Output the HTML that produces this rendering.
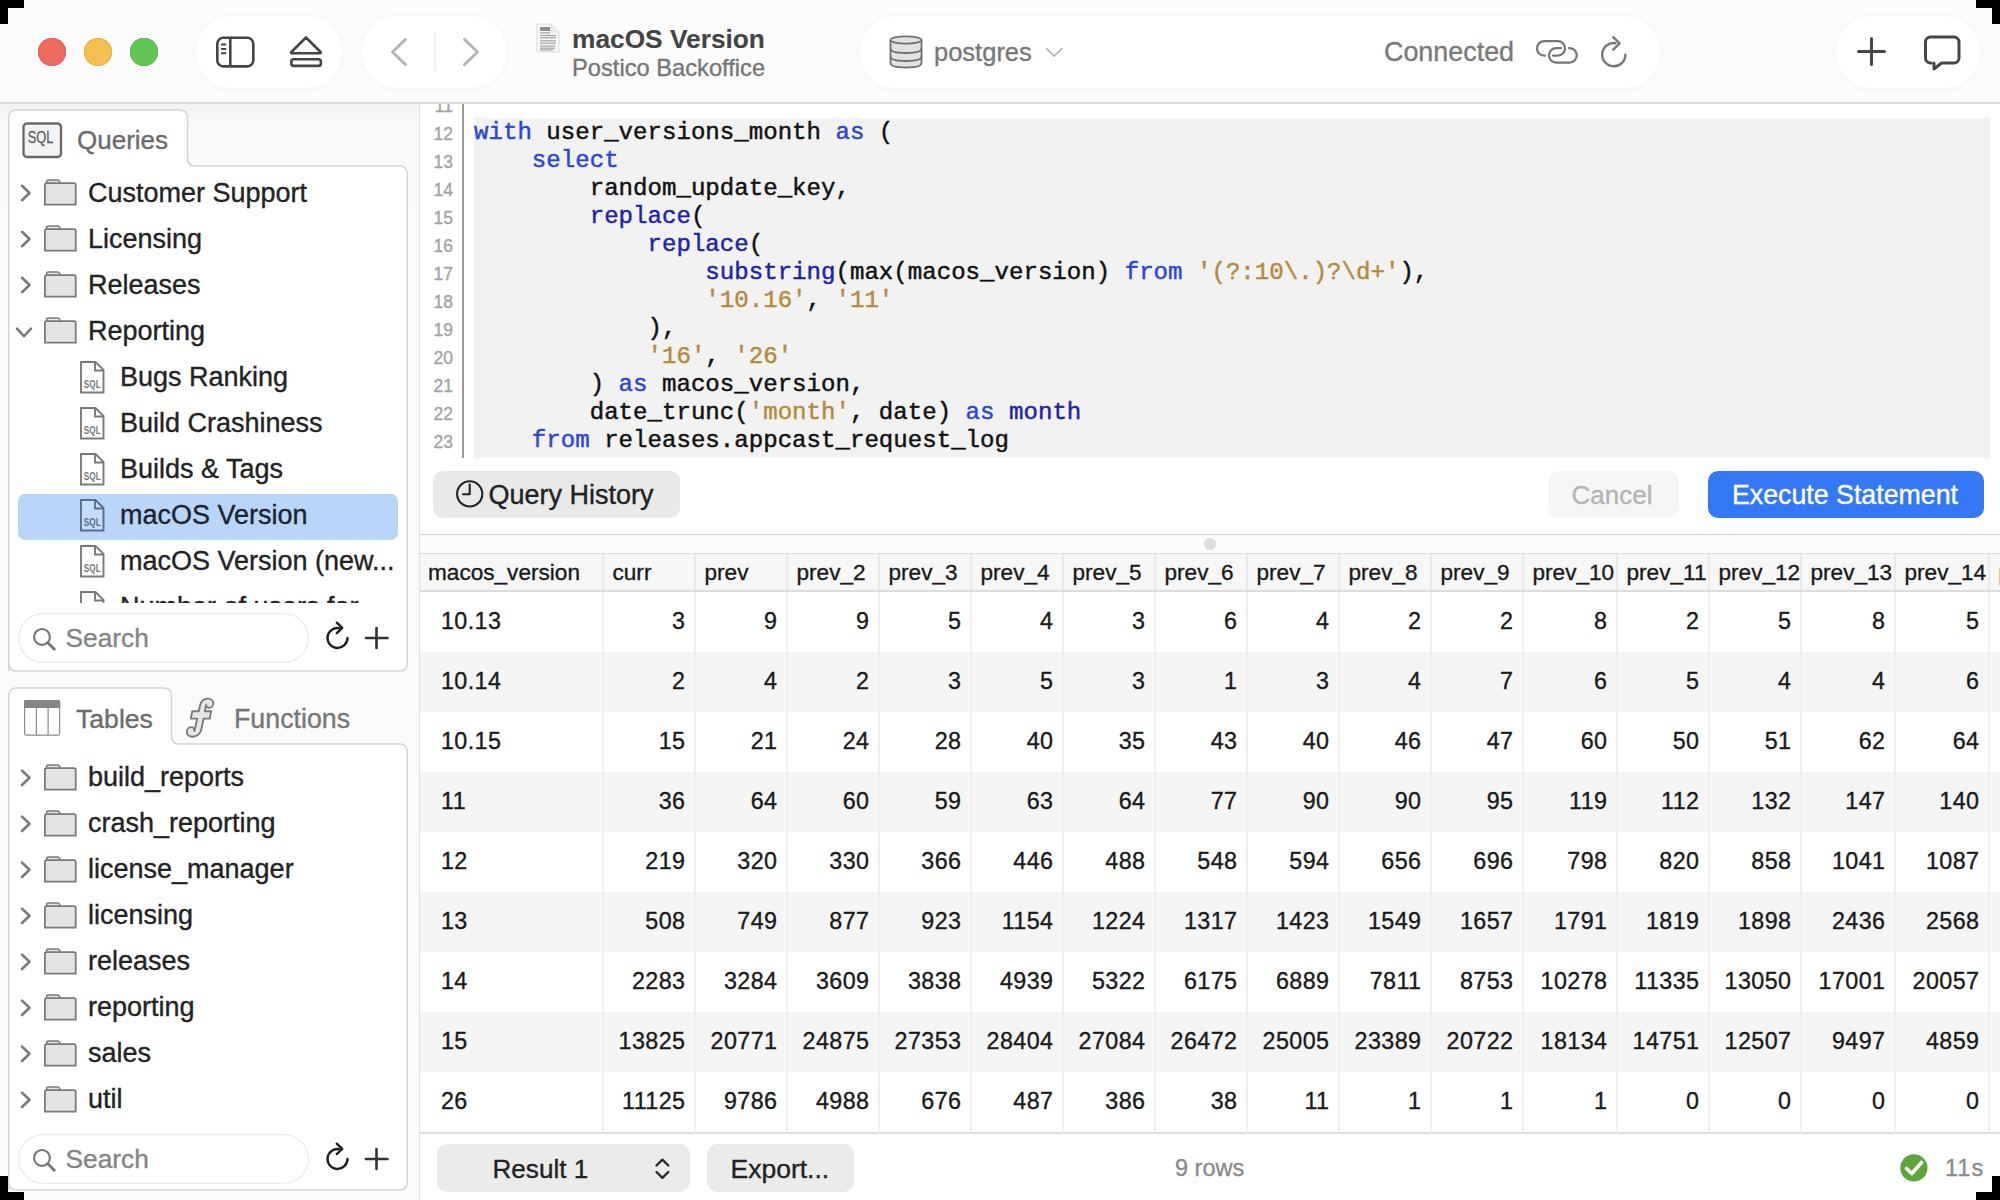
<!DOCTYPE html>
<html><head><meta charset="utf-8"><title>Postico</title>
<style>
*{margin:0;padding:0;box-sizing:border-box}
html,body{width:2000px;height:1200px;overflow:hidden;background:#fff}
body{position:relative;font-family:"Liberation Sans",sans-serif}
.t{position:absolute;line-height:0;white-space:pre;-webkit-text-stroke:0.35px}
.mono{position:absolute;line-height:0;white-space:pre;-webkit-text-stroke:0.45px;font-family:"Liberation Mono",monospace}
.abs{position:absolute}
svg{position:absolute;overflow:visible}
</style></head><body>
<div class="abs" style="left:0;top:0;width:2000px;height:102px;background:#fcfcfc"></div>
<div class="abs" style="left:0;top:102px;width:2000px;height:1.5px;background:#dadada"></div>
<div class="abs" style="left:38px;top:38px;width:28px;height:28px;border-radius:50%;background:#ed6a5e;box-shadow:inset 0 0 0 0.6px #d2574c"></div>
<div class="abs" style="left:84px;top:38px;width:28px;height:28px;border-radius:50%;background:#f4c04f;box-shadow:inset 0 0 0 0.6px #d9a63c"></div>
<div class="abs" style="left:130px;top:38px;width:28px;height:28px;border-radius:50%;background:#62c655;box-shadow:inset 0 0 0 0.6px #4fab43"></div>
<div class="abs" style="left:196px;top:16px;width:146px;height:72px;border-radius:36px;background:#fff;box-shadow:0 1px 9px 2px rgba(0,0,0,0.028)"></div>
<div class="abs" style="left:362px;top:16px;width:144px;height:72px;border-radius:36px;background:#fff;box-shadow:0 1px 9px 2px rgba(0,0,0,0.028)"></div>
<div class="abs" style="left:860px;top:16px;width:800px;height:72px;border-radius:36px;background:#fff;box-shadow:0 1px 9px 2px rgba(0,0,0,0.028)"></div>
<div class="abs" style="left:1836px;top:16px;width:144px;height:72px;border-radius:36px;background:#fff;box-shadow:0 1px 9px 2px rgba(0,0,0,0.028)"></div>
<svg style="left:0;top:0" width="2000" height="102">
<g fill="none" stroke="#454545" stroke-width="2.6" stroke-linecap="round">
<rect x="217.3" y="37.8" width="36" height="28.6" rx="6"/>
<line x1="230.3" y1="38" x2="230.3" y2="66"/>
<line x1="221.8" y1="44.6" x2="225.5" y2="44.6" stroke-width="2"/>
<line x1="221.8" y1="49" x2="225.5" y2="49" stroke-width="2"/>
<line x1="221.8" y1="53.3" x2="225.5" y2="53.3" stroke-width="2"/>
<path d="M306 37.5 L320.6 52 Q321.5 53 320 53.3 L291.8 53.3 Q290.4 53 291.4 52 Z" stroke-linejoin="round"/>
<rect x="291.3" y="59.3" width="29.6" height="6.6" rx="2.4"/>
</g>
<g fill="none" stroke="#b5b5b5" stroke-width="3" stroke-linecap="round" stroke-linejoin="round">
<path d="M405.5 39.5 L392.5 52 L405.5 64.5"/>
<path d="M464.5 39.5 L477.5 52 L464.5 64.5"/>
</g>
<line x1="435" y1="32" x2="435" y2="71.5" stroke="#e6e6e6" stroke-width="1.2"/>
</svg>
<svg style="left:536px;top:23px" width="24" height="30" viewBox="0 0 24 30">
<path d="M1 1 H15 L23 9 V29 H1 Z" fill="#f8f8f8" stroke="#dadada" stroke-width="1"/>
<path d="M15 1 V9 H23" fill="#ececec" stroke="#dadada" stroke-width="0.8"/>
<rect x="4" y="4" width="10" height="4" fill="#8e8e8e"/>
<g stroke="#a8a8a8" stroke-width="1.3">
<line x1="4" y1="9.8" x2="14" y2="9.8"/><line x1="4" y1="12.5" x2="20" y2="12.5"/><line x1="4" y1="14.8" x2="20" y2="14.8"/>
<line x1="4" y1="17.8" x2="20" y2="17.8"/><line x1="4" y1="20.2" x2="20" y2="20.2"/>
<line x1="4" y1="23" x2="19" y2="23"/><line x1="4" y1="25.2" x2="19" y2="25.2"/><line x1="4" y1="27" x2="17" y2="27"/>
</g></svg>
<div class="t" style="left:572px;top:38.89px;font-size:26.3px;color:#444444;font-weight:bold;-webkit-text-stroke:0.1px;">macOS Version</div>
<div class="t" style="left:572px;top:68.29px;font-size:23.7px;color:#767676;font-weight:normal;">Postico Backoffice</div>
<svg style="left:889px;top:35px" width="34" height="34" viewBox="0 0 34 34">
<g fill="#e2e2e2" stroke="#707070" stroke-width="1.8">
<path d="M1.5 5 V28 C1.5 31 8 32.5 17 32.5 C26 32.5 32.5 31 32.5 28 V5"/>
<ellipse cx="17" cy="5" rx="15.5" ry="3.6"/>
<path d="M1.5 13.5 C1.5 16.5 8 18 17 18 C26 18 32.5 16.5 32.5 13.5" fill="none"/>
<path d="M1.5 21.5 C1.5 24.5 8 26 17 26 C26 26 32.5 24.5 32.5 21.5" fill="none"/>
</g></svg>
<div class="t" style="left:934px;top:51.96px;font-size:25.5px;color:#777777;font-weight:normal;">postgres</div>
<svg style="left:0;top:0" width="2000" height="102">
<path d="M1046.5 48.7 L1054.2 56 L1061.9 48.7" fill="none" stroke="#b9b9b9" stroke-width="1.8" stroke-linecap="round" stroke-linejoin="round"/>
</svg>
<div class="t" style="left:1384px;top:52.48px;font-size:26.9px;color:#7a7a7a;font-weight:normal;">Connected</div>
<svg style="left:0;top:0" width="2000" height="102">
<g fill="none" stroke="#777777" stroke-width="2.3" stroke-linecap="round">
<path d="M1545 55.6 H1544.2 A7.2 7.2 0 0 1 1544.2 41.2 H1557.8 A7.2 7.2 0 0 1 1557.8 55.6 H1553"/>
<path d="M1569 48.1 H1569.5 A7.25 7.25 0 0 1 1569.5 62.6 H1556.2 A7.25 7.25 0 0 1 1556.2 48.1 H1561"/>
</g>
<g fill="none" stroke="#777777" stroke-width="2.4" stroke-linecap="round" stroke-linejoin="round">
<path d="M1625.4 54.7 A11.6 11.6 0 1 1 1615.5 43.2"/>
<path d="M1613.3 37.2 L1619.6 43.4 L1613.3 49.7"/>
</g>
<g fill="none" stroke="#464646" stroke-width="3" stroke-linecap="round" stroke-linejoin="round">
<line x1="1871.5" y1="38.5" x2="1871.5" y2="64.5"/>
<line x1="1858.5" y1="51.5" x2="1884.5" y2="51.5"/>
<path d="M1931 63 H1930 A5 5 0 0 1 1925.5 58 V42 A5 5 0 0 1 1930.5 37 H1954 A5 5 0 0 1 1959 42 V58 A5 5 0 0 1 1954 63 H1941.5 L1934 69 V63"/>
</g>
</svg>
<div class="abs" style="left:418.5px;top:103px;width:1.5px;height:1097px;background:#e2e2e2"></div>
<div class="abs" style="left:0;top:103.5px;width:418.5px;height:1096.5px;background:linear-gradient(#f3f3f3,#fafafa 30px,#fbfbfb)"></div>
<svg style="left:0;top:0" width="420" height="1200">
<path d="M8.75 671 V118 Q8.75 110 16.75 110 H179.5 Q187.5 110 187.5 118 V158 Q187.5 166 195.5 166 H399.25 Q407.25 166 407.25 174 V663 Q407.25 671 399.25 671 H16.75 Q8.75 671 8.75 663 Z" fill="#fff" stroke="#d5d5d5" stroke-width="1.5"/>
<path d="M8.75 1190 V696 Q8.75 688 16.75 688 H163.5 Q171.5 688 171.5 696 V736 Q171.5 744 179.5 744 H399.25 Q407.25 744 407.25 752 V1182 Q407.25 1190 399.25 1190 H16.75 Q8.75 1190 8.75 1182 Z" fill="#fff" stroke="#d5d5d5" stroke-width="1.5"/>
</svg>
<svg style="left:22px;top:122px" width="41" height="36" viewBox="0 0 41 36">
<rect x="1.5" y="1.5" width="37.5" height="33.5" rx="3.5" fill="#f4f4f4" stroke="#686868" stroke-width="2.3"/>
<text x="18.6" y="20.6" text-anchor="middle" font-family="Liberation Sans" font-size="16" fill="#5a5a5a" stroke="#5a5a5a" stroke-width="0.25" transform="translate(18.6 0) scale(0.8 1) translate(-18.6 0)">SQL</text>
</svg>
<div class="t" style="left:77px;top:140.49px;font-size:26px;color:#6b6b6b;font-weight:normal;">Queries</div>
<div class="abs" style="left:18px;top:494px;width:380px;height:45.5px;border-radius:7px;background:#b9d5f8"></div>
<div class="abs" style="left:10px;top:170px;width:396px;height:433px;overflow:hidden">
<svg style="left:0;top:0" width="1" height="1"><path d="M12 15.8 L19.5 23 L12 30.2" fill="none" stroke="#7b7b7b" stroke-width="2.6" stroke-linecap="round" stroke-linejoin="round"/></svg>
<svg style="left:34px;top:9px" width="34" height="28" viewBox="0 0 34 28"><path d="M2.6 4.2 V2.8 Q2.6 0.9 4.5 0.9 H13.6 Q15 0.9 15.6 2.2 L16.4 4.2" fill="#e4e4e4" stroke="#7a7a7a" stroke-width="1.5"/><path d="M0.9 25.6 V6 Q0.9 4.2 2.7 4.2 H30 Q31.7 4.2 31.7 6 V25.6 Z" fill="#e4e4e4" stroke="#7a7a7a" stroke-width="1.8"/></svg>
<div class="t" style="left:78.00px;top:22.64px;font-size:27.0px;color:#232323;font-weight:normal;">Customer Support</div>
<svg style="left:0;top:0" width="1" height="1"><path d="M12 61.8 L19.5 69 L12 76.2" fill="none" stroke="#7b7b7b" stroke-width="2.6" stroke-linecap="round" stroke-linejoin="round"/></svg>
<svg style="left:34px;top:55px" width="34" height="28" viewBox="0 0 34 28"><path d="M2.6 4.2 V2.8 Q2.6 0.9 4.5 0.9 H13.6 Q15 0.9 15.6 2.2 L16.4 4.2" fill="#e4e4e4" stroke="#7a7a7a" stroke-width="1.5"/><path d="M0.9 25.6 V6 Q0.9 4.2 2.7 4.2 H30 Q31.7 4.2 31.7 6 V25.6 Z" fill="#e4e4e4" stroke="#7a7a7a" stroke-width="1.8"/></svg>
<div class="t" style="left:78.00px;top:68.64px;font-size:27.0px;color:#232323;font-weight:normal;">Licensing</div>
<svg style="left:0;top:0" width="1" height="1"><path d="M12 107.8 L19.5 115 L12 122.2" fill="none" stroke="#7b7b7b" stroke-width="2.6" stroke-linecap="round" stroke-linejoin="round"/></svg>
<svg style="left:34px;top:101px" width="34" height="28" viewBox="0 0 34 28"><path d="M2.6 4.2 V2.8 Q2.6 0.9 4.5 0.9 H13.6 Q15 0.9 15.6 2.2 L16.4 4.2" fill="#e4e4e4" stroke="#7a7a7a" stroke-width="1.5"/><path d="M0.9 25.6 V6 Q0.9 4.2 2.7 4.2 H30 Q31.7 4.2 31.7 6 V25.6 Z" fill="#e4e4e4" stroke="#7a7a7a" stroke-width="1.8"/></svg>
<div class="t" style="left:78.00px;top:114.64px;font-size:27.0px;color:#232323;font-weight:normal;">Releases</div>
<svg style="left:0;top:0" width="1" height="1"><path d="M7 158.7 L14 166.1 L21 158.7" fill="none" stroke="#7b7b7b" stroke-width="2.6" stroke-linecap="round" stroke-linejoin="round"/></svg>
<svg style="left:34px;top:147px" width="34" height="28" viewBox="0 0 34 28"><path d="M2.6 4.2 V2.8 Q2.6 0.9 4.5 0.9 H13.6 Q15 0.9 15.6 2.2 L16.4 4.2" fill="#e4e4e4" stroke="#7a7a7a" stroke-width="1.5"/><path d="M0.9 25.6 V6 Q0.9 4.2 2.7 4.2 H30 Q31.7 4.2 31.7 6 V25.6 Z" fill="#e4e4e4" stroke="#7a7a7a" stroke-width="1.8"/></svg>
<div class="t" style="left:78.00px;top:160.64px;font-size:27.0px;color:#232323;font-weight:normal;">Reporting</div>
<svg style="left:70px;top:191px" width="25" height="33" viewBox="0 0 25 33"><path d="M1 1 H15.5 L23.5 9 V31.5 H1 Z" fill="#fff" stroke="#7a7a7a" stroke-width="1.9" stroke-linejoin="miter"/><path d="M15 1 V9.5 H23.5" fill="none" stroke="#7a7a7a" stroke-width="1.9"/><text x="12.3" y="27.3" text-anchor="middle" font-family="Liberation Sans" font-weight="bold" font-size="10.5" fill="#7a7a7a" transform="translate(12.3 0) scale(0.78 1) translate(-12.3 0)">SQL</text></svg>
<div class="t" style="left:110.00px;top:206.64px;font-size:27.0px;color:#232323;font-weight:normal;">Bugs Ranking</div>
<svg style="left:70px;top:237px" width="25" height="33" viewBox="0 0 25 33"><path d="M1 1 H15.5 L23.5 9 V31.5 H1 Z" fill="#fff" stroke="#7a7a7a" stroke-width="1.9" stroke-linejoin="miter"/><path d="M15 1 V9.5 H23.5" fill="none" stroke="#7a7a7a" stroke-width="1.9"/><text x="12.3" y="27.3" text-anchor="middle" font-family="Liberation Sans" font-weight="bold" font-size="10.5" fill="#7a7a7a" transform="translate(12.3 0) scale(0.78 1) translate(-12.3 0)">SQL</text></svg>
<div class="t" style="left:110.00px;top:252.64px;font-size:27.0px;color:#232323;font-weight:normal;">Build Crashiness</div>
<svg style="left:70px;top:283px" width="25" height="33" viewBox="0 0 25 33"><path d="M1 1 H15.5 L23.5 9 V31.5 H1 Z" fill="#fff" stroke="#7a7a7a" stroke-width="1.9" stroke-linejoin="miter"/><path d="M15 1 V9.5 H23.5" fill="none" stroke="#7a7a7a" stroke-width="1.9"/><text x="12.3" y="27.3" text-anchor="middle" font-family="Liberation Sans" font-weight="bold" font-size="10.5" fill="#7a7a7a" transform="translate(12.3 0) scale(0.78 1) translate(-12.3 0)">SQL</text></svg>
<div class="t" style="left:110.00px;top:298.64px;font-size:27.0px;color:#232323;font-weight:normal;">Builds &amp; Tags</div>
<svg style="left:70px;top:329px" width="25" height="33" viewBox="0 0 25 33"><path d="M1 1 H15.5 L23.5 9 V31.5 H1 Z" fill="#c7dcf7" stroke="#56708f" stroke-width="1.9" stroke-linejoin="miter"/><path d="M15 1 V9.5 H23.5" fill="none" stroke="#56708f" stroke-width="1.9"/><text x="12.3" y="27.3" text-anchor="middle" font-family="Liberation Sans" font-weight="bold" font-size="10.5" fill="#56708f" transform="translate(12.3 0) scale(0.78 1) translate(-12.3 0)">SQL</text></svg>
<div class="t" style="left:110.00px;top:344.64px;font-size:27.0px;color:#1d2430;font-weight:normal;">macOS Version</div>
<svg style="left:70px;top:375px" width="25" height="33" viewBox="0 0 25 33"><path d="M1 1 H15.5 L23.5 9 V31.5 H1 Z" fill="#fff" stroke="#7a7a7a" stroke-width="1.9" stroke-linejoin="miter"/><path d="M15 1 V9.5 H23.5" fill="none" stroke="#7a7a7a" stroke-width="1.9"/><text x="12.3" y="27.3" text-anchor="middle" font-family="Liberation Sans" font-weight="bold" font-size="10.5" fill="#7a7a7a" transform="translate(12.3 0) scale(0.78 1) translate(-12.3 0)">SQL</text></svg>
<div class="t" style="left:110.00px;top:390.64px;font-size:27.0px;color:#232323;font-weight:normal;">macOS Version (new...</div>
<svg style="left:70px;top:421px" width="25" height="33" viewBox="0 0 25 33"><path d="M1 1 H15.5 L23.5 9 V31.5 H1 Z" fill="#fff" stroke="#7a7a7a" stroke-width="1.9" stroke-linejoin="miter"/><path d="M15 1 V9.5 H23.5" fill="none" stroke="#7a7a7a" stroke-width="1.9"/><text x="12.3" y="27.3" text-anchor="middle" font-family="Liberation Sans" font-weight="bold" font-size="10.5" fill="#7a7a7a" transform="translate(12.3 0) scale(0.78 1) translate(-12.3 0)">SQL</text></svg>
<div class="t" style="left:110.00px;top:436.64px;font-size:27.0px;color:#232323;font-weight:normal;">Number of users for</div>
</div>
<div class="abs" style="left:17.5px;top:612.5px;width:291px;height:50px;border-radius:25px;background:#fff;box-shadow:inset 0 0 0 1.3px #ececec"></div>
<svg style="left:0;top:0" width="1" height="1"><g fill="none" stroke="#777777" stroke-width="2.2" stroke-linecap="round"><circle cx="42" cy="636.9" r="7.9"/><line x1="47.8" y1="642.7" x2="54.3" y2="649.3" stroke-width="2.8"/></g></svg>
<div class="t" style="left:65.5px;top:638.39px;font-size:26.3px;color:#858585;font-weight:normal;">Search</div>
<svg style="left:0;top:0" width="1" height="1"><g fill="none" stroke="#1e1e1e" stroke-width="2.4" stroke-linecap="round" stroke-linejoin="round"><path d="M347.5 638.0 A10 10 0 1 1 339 628.1"/><path d="M336.8 622.7 L342.2 627.9 L336.8 633.1"/><line x1="376.5" y1="628.0" x2="376.5" y2="648.0" stroke="#333" stroke-width="2.6"/><line x1="366" y1="638.0" x2="387.5" y2="638.0" stroke="#333" stroke-width="2.6"/></g></svg>
<svg style="left:24px;top:700px" width="37" height="37" viewBox="0 0 37 37">
<rect x="0.6" y="0.6" width="35" height="34.6" rx="1.5" fill="#fff" stroke="#8a8a8a" stroke-width="1.2"/>
<rect x="0" y="0" width="36.2" height="8" rx="1.5" fill="#858585"/>
<line x1="12.4" y1="7" x2="12.4" y2="35" stroke="#8a8a8a" stroke-width="1.2"/>
<line x1="24.1" y1="7" x2="24.1" y2="35" stroke="#8a8a8a" stroke-width="1.2"/>
</svg>
<div class="t" style="left:76px;top:718.78px;font-size:26.6px;color:#6b6b6b;font-weight:normal;">Tables</div>
<svg style="left:0;top:0" width="1" height="1">
<path d="M213.3 703.2 C213.3 706 211 707.8 208.8 707.8 C207 707.8 205.8 706.5 206.2 704.6 L204.8 711.2 H211.1 L209.8 718.6 H203.6 L201.3 729.5 C200.3 734 196.5 736.7 192.5 736.7 C189 736.7 186.8 734.6 186.8 732 C186.8 729.2 188.9 727.1 191.2 727.1 C193 727.1 194.6 728.6 194.4 731 L197.3 718.6 H190.8 L192.3 711.2 H198.8 L200 705.5 C201 701 204 698.6 207.6 698.6 C210.9 698.6 213.3 700.6 213.3 703.2 Z" fill="#e6e6e6" stroke="#7a7a7a" stroke-width="1.9" stroke-linejoin="round"/>
</svg>
<div class="t" style="left:234px;top:718.71px;font-size:26.8px;color:#777777;font-weight:normal;">Functions</div>
<svg style="left:0;top:0" width="1" height="1"><path d="M22 770.5999999999999 L29.5 777.8 L22 785.0" fill="none" stroke="#7b7b7b" stroke-width="2.6" stroke-linecap="round" stroke-linejoin="round"/></svg>
<svg style="left:44px;top:763.8px" width="34" height="28" viewBox="0 0 34 28"><path d="M2.6 4.2 V2.8 Q2.6 0.9 4.5 0.9 H13.6 Q15 0.9 15.6 2.2 L16.4 4.2" fill="#e4e4e4" stroke="#7a7a7a" stroke-width="1.5"/><path d="M0.9 25.6 V6 Q0.9 4.2 2.7 4.2 H30 Q31.7 4.2 31.7 6 V25.6 Z" fill="#e4e4e4" stroke="#7a7a7a" stroke-width="1.8"/></svg>
<div class="t" style="left:88px;top:777.44px;font-size:27.0px;color:#232323;font-weight:normal;">build_reports</div>
<svg style="left:0;top:0" width="1" height="1"><path d="M22 816.5999999999999 L29.5 823.8 L22 831.0" fill="none" stroke="#7b7b7b" stroke-width="2.6" stroke-linecap="round" stroke-linejoin="round"/></svg>
<svg style="left:44px;top:809.8px" width="34" height="28" viewBox="0 0 34 28"><path d="M2.6 4.2 V2.8 Q2.6 0.9 4.5 0.9 H13.6 Q15 0.9 15.6 2.2 L16.4 4.2" fill="#e4e4e4" stroke="#7a7a7a" stroke-width="1.5"/><path d="M0.9 25.6 V6 Q0.9 4.2 2.7 4.2 H30 Q31.7 4.2 31.7 6 V25.6 Z" fill="#e4e4e4" stroke="#7a7a7a" stroke-width="1.8"/></svg>
<div class="t" style="left:88px;top:823.44px;font-size:27.0px;color:#232323;font-weight:normal;">crash_reporting</div>
<svg style="left:0;top:0" width="1" height="1"><path d="M22 862.5999999999999 L29.5 869.8 L22 877.0" fill="none" stroke="#7b7b7b" stroke-width="2.6" stroke-linecap="round" stroke-linejoin="round"/></svg>
<svg style="left:44px;top:855.8px" width="34" height="28" viewBox="0 0 34 28"><path d="M2.6 4.2 V2.8 Q2.6 0.9 4.5 0.9 H13.6 Q15 0.9 15.6 2.2 L16.4 4.2" fill="#e4e4e4" stroke="#7a7a7a" stroke-width="1.5"/><path d="M0.9 25.6 V6 Q0.9 4.2 2.7 4.2 H30 Q31.7 4.2 31.7 6 V25.6 Z" fill="#e4e4e4" stroke="#7a7a7a" stroke-width="1.8"/></svg>
<div class="t" style="left:88px;top:869.44px;font-size:27.0px;color:#232323;font-weight:normal;">license_manager</div>
<svg style="left:0;top:0" width="1" height="1"><path d="M22 908.5999999999999 L29.5 915.8 L22 923.0" fill="none" stroke="#7b7b7b" stroke-width="2.6" stroke-linecap="round" stroke-linejoin="round"/></svg>
<svg style="left:44px;top:901.8px" width="34" height="28" viewBox="0 0 34 28"><path d="M2.6 4.2 V2.8 Q2.6 0.9 4.5 0.9 H13.6 Q15 0.9 15.6 2.2 L16.4 4.2" fill="#e4e4e4" stroke="#7a7a7a" stroke-width="1.5"/><path d="M0.9 25.6 V6 Q0.9 4.2 2.7 4.2 H30 Q31.7 4.2 31.7 6 V25.6 Z" fill="#e4e4e4" stroke="#7a7a7a" stroke-width="1.8"/></svg>
<div class="t" style="left:88px;top:915.44px;font-size:27.0px;color:#232323;font-weight:normal;">licensing</div>
<svg style="left:0;top:0" width="1" height="1"><path d="M22 954.5999999999999 L29.5 961.8 L22 969.0" fill="none" stroke="#7b7b7b" stroke-width="2.6" stroke-linecap="round" stroke-linejoin="round"/></svg>
<svg style="left:44px;top:947.8px" width="34" height="28" viewBox="0 0 34 28"><path d="M2.6 4.2 V2.8 Q2.6 0.9 4.5 0.9 H13.6 Q15 0.9 15.6 2.2 L16.4 4.2" fill="#e4e4e4" stroke="#7a7a7a" stroke-width="1.5"/><path d="M0.9 25.6 V6 Q0.9 4.2 2.7 4.2 H30 Q31.7 4.2 31.7 6 V25.6 Z" fill="#e4e4e4" stroke="#7a7a7a" stroke-width="1.8"/></svg>
<div class="t" style="left:88px;top:961.44px;font-size:27.0px;color:#232323;font-weight:normal;">releases</div>
<svg style="left:0;top:0" width="1" height="1"><path d="M22 1000.5999999999999 L29.5 1007.8 L22 1015.0" fill="none" stroke="#7b7b7b" stroke-width="2.6" stroke-linecap="round" stroke-linejoin="round"/></svg>
<svg style="left:44px;top:993.8px" width="34" height="28" viewBox="0 0 34 28"><path d="M2.6 4.2 V2.8 Q2.6 0.9 4.5 0.9 H13.6 Q15 0.9 15.6 2.2 L16.4 4.2" fill="#e4e4e4" stroke="#7a7a7a" stroke-width="1.5"/><path d="M0.9 25.6 V6 Q0.9 4.2 2.7 4.2 H30 Q31.7 4.2 31.7 6 V25.6 Z" fill="#e4e4e4" stroke="#7a7a7a" stroke-width="1.8"/></svg>
<div class="t" style="left:88px;top:1007.44px;font-size:27.0px;color:#232323;font-weight:normal;">reporting</div>
<svg style="left:0;top:0" width="1" height="1"><path d="M22 1046.6 L29.5 1053.8 L22 1061.0" fill="none" stroke="#7b7b7b" stroke-width="2.6" stroke-linecap="round" stroke-linejoin="round"/></svg>
<svg style="left:44px;top:1039.8px" width="34" height="28" viewBox="0 0 34 28"><path d="M2.6 4.2 V2.8 Q2.6 0.9 4.5 0.9 H13.6 Q15 0.9 15.6 2.2 L16.4 4.2" fill="#e4e4e4" stroke="#7a7a7a" stroke-width="1.5"/><path d="M0.9 25.6 V6 Q0.9 4.2 2.7 4.2 H30 Q31.7 4.2 31.7 6 V25.6 Z" fill="#e4e4e4" stroke="#7a7a7a" stroke-width="1.8"/></svg>
<div class="t" style="left:88px;top:1053.44px;font-size:27.0px;color:#232323;font-weight:normal;">sales</div>
<svg style="left:0;top:0" width="1" height="1"><path d="M22 1092.6 L29.5 1099.8 L22 1107.0" fill="none" stroke="#7b7b7b" stroke-width="2.6" stroke-linecap="round" stroke-linejoin="round"/></svg>
<svg style="left:44px;top:1085.8px" width="34" height="28" viewBox="0 0 34 28"><path d="M2.6 4.2 V2.8 Q2.6 0.9 4.5 0.9 H13.6 Q15 0.9 15.6 2.2 L16.4 4.2" fill="#e4e4e4" stroke="#7a7a7a" stroke-width="1.5"/><path d="M0.9 25.6 V6 Q0.9 4.2 2.7 4.2 H30 Q31.7 4.2 31.7 6 V25.6 Z" fill="#e4e4e4" stroke="#7a7a7a" stroke-width="1.8"/></svg>
<div class="t" style="left:88px;top:1099.44px;font-size:27.0px;color:#232323;font-weight:normal;">util</div>
<div class="abs" style="left:17.5px;top:1133.5px;width:291px;height:50px;border-radius:25px;background:#fff;box-shadow:inset 0 0 0 1.3px #ececec"></div>
<svg style="left:0;top:0" width="1" height="1"><g fill="none" stroke="#777777" stroke-width="2.2" stroke-linecap="round"><circle cx="42" cy="1157.9" r="7.9"/><line x1="47.8" y1="1163.7" x2="54.3" y2="1170.3" stroke-width="2.8"/></g></svg>
<div class="t" style="left:65.5px;top:1159.39px;font-size:26.3px;color:#858585;font-weight:normal;">Search</div>
<svg style="left:0;top:0" width="1" height="1"><g fill="none" stroke="#1e1e1e" stroke-width="2.4" stroke-linecap="round" stroke-linejoin="round"><path d="M347.5 1159.0 A10 10 0 1 1 339 1149.1"/><path d="M336.8 1143.7 L342.2 1148.9 L336.8 1154.1"/><line x1="376.5" y1="1149.0" x2="376.5" y2="1169.0" stroke="#333" stroke-width="2.6"/><line x1="366" y1="1159.0" x2="387.5" y2="1159.0" stroke="#333" stroke-width="2.6"/></g></svg>
<div class="abs" style="left:462px;top:103.5px;width:1.6px;height:354px;background:#9a9a9a"></div>
<div class="abs" style="left:473.5px;top:118px;width:1516px;height:339.5px;background:#f2f2f2"></div>
<div class="abs" style="left:420px;top:103.5px;width:1580px;height:354px;overflow:hidden">
<div class="t" style="left:33px;top:2.74px;font-size:17.5px;color:#a3a3a3;font-weight:normal;transform:translateX(-100%);">11</div>
<div class="t" style="left:33px;top:30.74px;font-size:17.5px;color:#a3a3a3;font-weight:normal;transform:translateX(-100%);">12</div>
<div class="mono" style="left:54px;top:29.59px;font-size:24.1px;color:#111111;font-weight:normal;"><span style="color:#2a45d8">with</span> user_versions_month <span style="color:#2a45d8">as</span> (</div>
<div class="t" style="left:33px;top:58.74px;font-size:17.5px;color:#a3a3a3;font-weight:normal;transform:translateX(-100%);">13</div>
<div class="mono" style="left:54px;top:57.59px;font-size:24.1px;color:#111111;font-weight:normal;">    <span style="color:#2a45d8">select</span></div>
<div class="t" style="left:33px;top:86.74px;font-size:17.5px;color:#a3a3a3;font-weight:normal;transform:translateX(-100%);">14</div>
<div class="mono" style="left:54px;top:85.59px;font-size:24.1px;color:#111111;font-weight:normal;">        random_update_key,</div>
<div class="t" style="left:33px;top:114.74px;font-size:17.5px;color:#a3a3a3;font-weight:normal;transform:translateX(-100%);">15</div>
<div class="mono" style="left:54px;top:113.59px;font-size:24.1px;color:#111111;font-weight:normal;">        <span style="color:#1f22ab">replace</span>(</div>
<div class="t" style="left:33px;top:142.74px;font-size:17.5px;color:#a3a3a3;font-weight:normal;transform:translateX(-100%);">16</div>
<div class="mono" style="left:54px;top:141.59px;font-size:24.1px;color:#111111;font-weight:normal;">            <span style="color:#1f22ab">replace</span>(</div>
<div class="t" style="left:33px;top:170.74px;font-size:17.5px;color:#a3a3a3;font-weight:normal;transform:translateX(-100%);">17</div>
<div class="mono" style="left:54px;top:169.59px;font-size:24.1px;color:#111111;font-weight:normal;">                <span style="color:#1f22ab">substring</span>(max(macos_version) <span style="color:#2a45d8">from</span> <span style="color:#b48b3d">'(?:10\.)?\d+'</span>),</div>
<div class="t" style="left:33px;top:198.74px;font-size:17.5px;color:#a3a3a3;font-weight:normal;transform:translateX(-100%);">18</div>
<div class="mono" style="left:54px;top:197.59px;font-size:24.1px;color:#111111;font-weight:normal;">                <span style="color:#b48b3d">'10.16'</span>, <span style="color:#b48b3d">'11'</span></div>
<div class="t" style="left:33px;top:226.74px;font-size:17.5px;color:#a3a3a3;font-weight:normal;transform:translateX(-100%);">19</div>
<div class="mono" style="left:54px;top:225.59px;font-size:24.1px;color:#111111;font-weight:normal;">            ),</div>
<div class="t" style="left:33px;top:254.74px;font-size:17.5px;color:#a3a3a3;font-weight:normal;transform:translateX(-100%);">20</div>
<div class="mono" style="left:54px;top:253.59px;font-size:24.1px;color:#111111;font-weight:normal;">            <span style="color:#b48b3d">'16'</span>, <span style="color:#b48b3d">'26'</span></div>
<div class="t" style="left:33px;top:282.74px;font-size:17.5px;color:#a3a3a3;font-weight:normal;transform:translateX(-100%);">21</div>
<div class="mono" style="left:54px;top:281.59px;font-size:24.1px;color:#111111;font-weight:normal;">        ) <span style="color:#2a45d8">as</span> macos_version,</div>
<div class="t" style="left:33px;top:310.74px;font-size:17.5px;color:#a3a3a3;font-weight:normal;transform:translateX(-100%);">22</div>
<div class="mono" style="left:54px;top:309.59px;font-size:24.1px;color:#111111;font-weight:normal;">        date_trunc(<span style="color:#b48b3d">'month'</span>, date) <span style="color:#2a45d8">as</span> <span style="color:#1f22ab">month</span></div>
<div class="t" style="left:33px;top:338.74px;font-size:17.5px;color:#a3a3a3;font-weight:normal;transform:translateX(-100%);">23</div>
<div class="mono" style="left:54px;top:337.59px;font-size:24.1px;color:#111111;font-weight:normal;">    <span style="color:#2a45d8">from</span> releases.appcast_request_log</div>
<div class="t" style="left:33px;top:366.74px;font-size:17.5px;color:#a3a3a3;font-weight:normal;transform:translateX(-100%);">24</div>
</div>
<div class="abs" style="left:432.5px;top:470.5px;width:247.5px;height:47.5px;border-radius:10px;background:#e9e9e9"></div>
<svg style="left:0;top:0" width="1" height="1"><g fill="none" stroke="#222" stroke-width="2.1" stroke-linecap="round" stroke-linejoin="round">
<circle cx="469.7" cy="493.9" r="12.6"/><path d="M469.7 484.5 V494.2 H463"/></g></svg>
<div class="t" style="left:488.5px;top:494.64px;font-size:27px;color:#222222;font-weight:normal;">Query History</div>
<div class="abs" style="left:1547.5px;top:470.5px;width:131.5px;height:47px;border-radius:10px;background:#f6f6f6"></div>
<div class="t" style="left:1571.5px;top:494.99px;font-size:26px;color:#b4b4b4;font-weight:normal;">Cancel</div>
<div class="abs" style="left:1707.5px;top:470.5px;width:276px;height:47px;border-radius:10px;background:#3478f6"></div>
<div class="t" style="left:1732px;top:494.73px;font-size:26.75px;color:#ffffff;font-weight:normal;">Execute Statement</div>
<div class="abs" style="left:420px;top:534px;width:1580px;height:1.4px;background:#d6d6d6"></div>
<div class="abs" style="left:420px;top:535.4px;width:1580px;height:18px;background:#fbfbfb"></div>
<div class="abs" style="left:1204px;top:538px;width:12px;height:12px;border-radius:50%;background:#dedede"></div>
<div class="abs" style="left:420px;top:553px;width:1580px;height:1.3px;background:#dedede"></div>
<div class="abs" style="left:420px;top:554.3px;width:1580px;height:36px;background:#f7f7f7"></div>
<div class="abs" style="left:420px;top:590px;width:1580px;height:2px;background:#dcdcdc"></div>
<div class="abs" style="left:420px;top:592px;width:1580px;height:60px;background:#ffffff"></div>
<div class="abs" style="left:420px;top:652px;width:1580px;height:60px;background:#f5f5f5"></div>
<div class="abs" style="left:420px;top:712px;width:1580px;height:60px;background:#ffffff"></div>
<div class="abs" style="left:420px;top:772px;width:1580px;height:60px;background:#f5f5f5"></div>
<div class="abs" style="left:420px;top:832px;width:1580px;height:60px;background:#ffffff"></div>
<div class="abs" style="left:420px;top:892px;width:1580px;height:60px;background:#f5f5f5"></div>
<div class="abs" style="left:420px;top:952px;width:1580px;height:60px;background:#ffffff"></div>
<div class="abs" style="left:420px;top:1012px;width:1580px;height:60px;background:#f5f5f5"></div>
<div class="abs" style="left:420px;top:1072px;width:1580px;height:60px;background:#ffffff"></div>
<div class="abs" style="left:420px;top:1132.3px;width:1580px;height:1.6px;background:#dedede"></div>
<div class="abs" style="left:602.4px;top:554px;width:1.2px;height:36px;background:#eaeaea"></div>
<div class="abs" style="left:602.25px;top:592px;width:1.5px;height:540.5px;background:#f0f0f0"></div>
<div class="abs" style="left:694.4px;top:554px;width:1.2px;height:36px;background:#eaeaea"></div>
<div class="abs" style="left:694.25px;top:592px;width:1.5px;height:540.5px;background:#f0f0f0"></div>
<div class="abs" style="left:786.4px;top:554px;width:1.2px;height:36px;background:#eaeaea"></div>
<div class="abs" style="left:786.25px;top:592px;width:1.5px;height:540.5px;background:#f0f0f0"></div>
<div class="abs" style="left:878.4px;top:554px;width:1.2px;height:36px;background:#eaeaea"></div>
<div class="abs" style="left:878.25px;top:592px;width:1.5px;height:540.5px;background:#f0f0f0"></div>
<div class="abs" style="left:970.4px;top:554px;width:1.2px;height:36px;background:#eaeaea"></div>
<div class="abs" style="left:970.25px;top:592px;width:1.5px;height:540.5px;background:#f0f0f0"></div>
<div class="abs" style="left:1062.4px;top:554px;width:1.2px;height:36px;background:#eaeaea"></div>
<div class="abs" style="left:1062.25px;top:592px;width:1.5px;height:540.5px;background:#f0f0f0"></div>
<div class="abs" style="left:1154.4px;top:554px;width:1.2px;height:36px;background:#eaeaea"></div>
<div class="abs" style="left:1154.25px;top:592px;width:1.5px;height:540.5px;background:#f0f0f0"></div>
<div class="abs" style="left:1246.4px;top:554px;width:1.2px;height:36px;background:#eaeaea"></div>
<div class="abs" style="left:1246.25px;top:592px;width:1.5px;height:540.5px;background:#f0f0f0"></div>
<div class="abs" style="left:1338.4px;top:554px;width:1.2px;height:36px;background:#eaeaea"></div>
<div class="abs" style="left:1338.25px;top:592px;width:1.5px;height:540.5px;background:#f0f0f0"></div>
<div class="abs" style="left:1430.4px;top:554px;width:1.2px;height:36px;background:#eaeaea"></div>
<div class="abs" style="left:1430.25px;top:592px;width:1.5px;height:540.5px;background:#f0f0f0"></div>
<div class="abs" style="left:1522.4px;top:554px;width:1.2px;height:36px;background:#eaeaea"></div>
<div class="abs" style="left:1522.25px;top:592px;width:1.5px;height:540.5px;background:#f0f0f0"></div>
<div class="abs" style="left:1616.4px;top:554px;width:1.2px;height:36px;background:#eaeaea"></div>
<div class="abs" style="left:1616.25px;top:592px;width:1.5px;height:540.5px;background:#f0f0f0"></div>
<div class="abs" style="left:1708.4px;top:554px;width:1.2px;height:36px;background:#eaeaea"></div>
<div class="abs" style="left:1708.25px;top:592px;width:1.5px;height:540.5px;background:#f0f0f0"></div>
<div class="abs" style="left:1800.4px;top:554px;width:1.2px;height:36px;background:#eaeaea"></div>
<div class="abs" style="left:1800.25px;top:592px;width:1.5px;height:540.5px;background:#f0f0f0"></div>
<div class="abs" style="left:1894.4px;top:554px;width:1.2px;height:36px;background:#eaeaea"></div>
<div class="abs" style="left:1894.25px;top:592px;width:1.5px;height:540.5px;background:#f0f0f0"></div>
<div class="abs" style="left:1988.4px;top:554px;width:1.2px;height:36px;background:#eaeaea"></div>
<div class="abs" style="left:1988.25px;top:592px;width:1.5px;height:540.5px;background:#f0f0f0"></div>
<div class="abs" style="left:420px;top:554px;width:1580px;height:580px;overflow:hidden">
<div class="t" style="left:8px;top:18.97px;font-size:22.6px;color:#1a1a1a;font-weight:normal;">macos_version</div>
<div class="t" style="left:192.5px;top:18.97px;font-size:22.6px;color:#1a1a1a;font-weight:normal;">curr</div>
<div class="t" style="left:284.5px;top:18.97px;font-size:22.6px;color:#1a1a1a;font-weight:normal;">prev</div>
<div class="t" style="left:376.5px;top:18.97px;font-size:22.6px;color:#1a1a1a;font-weight:normal;">prev_2</div>
<div class="t" style="left:468.5px;top:18.97px;font-size:22.6px;color:#1a1a1a;font-weight:normal;">prev_3</div>
<div class="t" style="left:560.5px;top:18.97px;font-size:22.6px;color:#1a1a1a;font-weight:normal;">prev_4</div>
<div class="t" style="left:652.5px;top:18.97px;font-size:22.6px;color:#1a1a1a;font-weight:normal;">prev_5</div>
<div class="t" style="left:744.5px;top:18.97px;font-size:22.6px;color:#1a1a1a;font-weight:normal;">prev_6</div>
<div class="t" style="left:836.5px;top:18.97px;font-size:22.6px;color:#1a1a1a;font-weight:normal;">prev_7</div>
<div class="t" style="left:928.5px;top:18.97px;font-size:22.6px;color:#1a1a1a;font-weight:normal;">prev_8</div>
<div class="t" style="left:1020.5px;top:18.97px;font-size:22.6px;color:#1a1a1a;font-weight:normal;">prev_9</div>
<div class="t" style="left:1112.5px;top:18.97px;font-size:22.6px;color:#1a1a1a;font-weight:normal;">prev_10</div>
<div class="t" style="left:1206.5px;top:18.97px;font-size:22.6px;color:#1a1a1a;font-weight:normal;">prev_11</div>
<div class="t" style="left:1298.5px;top:18.97px;font-size:22.6px;color:#1a1a1a;font-weight:normal;">prev_12</div>
<div class="t" style="left:1390.5px;top:18.97px;font-size:22.6px;color:#1a1a1a;font-weight:normal;">prev_13</div>
<div class="t" style="left:1484.5px;top:18.97px;font-size:22.6px;color:#1a1a1a;font-weight:normal;">prev_14</div>
<div class="t" style="left:1578.5px;top:18.97px;font-size:22.6px;color:#1a1a1a;font-weight:normal;">prev_15</div>
<div class="t" style="left:21px;top:66.93px;font-size:23.3px;color:#1a1a1a;font-weight:normal;letter-spacing:0.4px;">10.13</div>
<div class="t" style="left:265.4px;top:66.93px;font-size:23.3px;color:#1a1a1a;font-weight:normal;transform:translateX(-100%);letter-spacing:0.4px;">3</div>
<div class="t" style="left:357.4px;top:66.93px;font-size:23.3px;color:#1a1a1a;font-weight:normal;transform:translateX(-100%);letter-spacing:0.4px;">9</div>
<div class="t" style="left:449.4px;top:66.93px;font-size:23.3px;color:#1a1a1a;font-weight:normal;transform:translateX(-100%);letter-spacing:0.4px;">9</div>
<div class="t" style="left:541.4px;top:66.93px;font-size:23.3px;color:#1a1a1a;font-weight:normal;transform:translateX(-100%);letter-spacing:0.4px;">5</div>
<div class="t" style="left:633.4000000000001px;top:66.93px;font-size:23.3px;color:#1a1a1a;font-weight:normal;transform:translateX(-100%);letter-spacing:0.4px;">4</div>
<div class="t" style="left:725.4000000000001px;top:66.93px;font-size:23.3px;color:#1a1a1a;font-weight:normal;transform:translateX(-100%);letter-spacing:0.4px;">3</div>
<div class="t" style="left:817.4000000000001px;top:66.93px;font-size:23.3px;color:#1a1a1a;font-weight:normal;transform:translateX(-100%);letter-spacing:0.4px;">6</div>
<div class="t" style="left:909.4000000000001px;top:66.93px;font-size:23.3px;color:#1a1a1a;font-weight:normal;transform:translateX(-100%);letter-spacing:0.4px;">4</div>
<div class="t" style="left:1001.4000000000001px;top:66.93px;font-size:23.3px;color:#1a1a1a;font-weight:normal;transform:translateX(-100%);letter-spacing:0.4px;">2</div>
<div class="t" style="left:1093.4px;top:66.93px;font-size:23.3px;color:#1a1a1a;font-weight:normal;transform:translateX(-100%);letter-spacing:0.4px;">2</div>
<div class="t" style="left:1187.4px;top:66.93px;font-size:23.3px;color:#1a1a1a;font-weight:normal;transform:translateX(-100%);letter-spacing:0.4px;">8</div>
<div class="t" style="left:1279.4px;top:66.93px;font-size:23.3px;color:#1a1a1a;font-weight:normal;transform:translateX(-100%);letter-spacing:0.4px;">2</div>
<div class="t" style="left:1371.4px;top:66.93px;font-size:23.3px;color:#1a1a1a;font-weight:normal;transform:translateX(-100%);letter-spacing:0.4px;">5</div>
<div class="t" style="left:1465.4px;top:66.93px;font-size:23.3px;color:#1a1a1a;font-weight:normal;transform:translateX(-100%);letter-spacing:0.4px;">8</div>
<div class="t" style="left:1559.4px;top:66.93px;font-size:23.3px;color:#1a1a1a;font-weight:normal;transform:translateX(-100%);letter-spacing:0.4px;">5</div>
<div class="t" style="left:21px;top:126.93px;font-size:23.3px;color:#1a1a1a;font-weight:normal;letter-spacing:0.4px;">10.14</div>
<div class="t" style="left:265.4px;top:126.93px;font-size:23.3px;color:#1a1a1a;font-weight:normal;transform:translateX(-100%);letter-spacing:0.4px;">2</div>
<div class="t" style="left:357.4px;top:126.93px;font-size:23.3px;color:#1a1a1a;font-weight:normal;transform:translateX(-100%);letter-spacing:0.4px;">4</div>
<div class="t" style="left:449.4px;top:126.93px;font-size:23.3px;color:#1a1a1a;font-weight:normal;transform:translateX(-100%);letter-spacing:0.4px;">2</div>
<div class="t" style="left:541.4px;top:126.93px;font-size:23.3px;color:#1a1a1a;font-weight:normal;transform:translateX(-100%);letter-spacing:0.4px;">3</div>
<div class="t" style="left:633.4000000000001px;top:126.93px;font-size:23.3px;color:#1a1a1a;font-weight:normal;transform:translateX(-100%);letter-spacing:0.4px;">5</div>
<div class="t" style="left:725.4000000000001px;top:126.93px;font-size:23.3px;color:#1a1a1a;font-weight:normal;transform:translateX(-100%);letter-spacing:0.4px;">3</div>
<div class="t" style="left:817.4000000000001px;top:126.93px;font-size:23.3px;color:#1a1a1a;font-weight:normal;transform:translateX(-100%);letter-spacing:0.4px;">1</div>
<div class="t" style="left:909.4000000000001px;top:126.93px;font-size:23.3px;color:#1a1a1a;font-weight:normal;transform:translateX(-100%);letter-spacing:0.4px;">3</div>
<div class="t" style="left:1001.4000000000001px;top:126.93px;font-size:23.3px;color:#1a1a1a;font-weight:normal;transform:translateX(-100%);letter-spacing:0.4px;">4</div>
<div class="t" style="left:1093.4px;top:126.93px;font-size:23.3px;color:#1a1a1a;font-weight:normal;transform:translateX(-100%);letter-spacing:0.4px;">7</div>
<div class="t" style="left:1187.4px;top:126.93px;font-size:23.3px;color:#1a1a1a;font-weight:normal;transform:translateX(-100%);letter-spacing:0.4px;">6</div>
<div class="t" style="left:1279.4px;top:126.93px;font-size:23.3px;color:#1a1a1a;font-weight:normal;transform:translateX(-100%);letter-spacing:0.4px;">5</div>
<div class="t" style="left:1371.4px;top:126.93px;font-size:23.3px;color:#1a1a1a;font-weight:normal;transform:translateX(-100%);letter-spacing:0.4px;">4</div>
<div class="t" style="left:1465.4px;top:126.93px;font-size:23.3px;color:#1a1a1a;font-weight:normal;transform:translateX(-100%);letter-spacing:0.4px;">4</div>
<div class="t" style="left:1559.4px;top:126.93px;font-size:23.3px;color:#1a1a1a;font-weight:normal;transform:translateX(-100%);letter-spacing:0.4px;">6</div>
<div class="t" style="left:21px;top:186.93px;font-size:23.3px;color:#1a1a1a;font-weight:normal;letter-spacing:0.4px;">10.15</div>
<div class="t" style="left:265.4px;top:186.93px;font-size:23.3px;color:#1a1a1a;font-weight:normal;transform:translateX(-100%);letter-spacing:0.4px;">15</div>
<div class="t" style="left:357.4px;top:186.93px;font-size:23.3px;color:#1a1a1a;font-weight:normal;transform:translateX(-100%);letter-spacing:0.4px;">21</div>
<div class="t" style="left:449.4px;top:186.93px;font-size:23.3px;color:#1a1a1a;font-weight:normal;transform:translateX(-100%);letter-spacing:0.4px;">24</div>
<div class="t" style="left:541.4px;top:186.93px;font-size:23.3px;color:#1a1a1a;font-weight:normal;transform:translateX(-100%);letter-spacing:0.4px;">28</div>
<div class="t" style="left:633.4000000000001px;top:186.93px;font-size:23.3px;color:#1a1a1a;font-weight:normal;transform:translateX(-100%);letter-spacing:0.4px;">40</div>
<div class="t" style="left:725.4000000000001px;top:186.93px;font-size:23.3px;color:#1a1a1a;font-weight:normal;transform:translateX(-100%);letter-spacing:0.4px;">35</div>
<div class="t" style="left:817.4000000000001px;top:186.93px;font-size:23.3px;color:#1a1a1a;font-weight:normal;transform:translateX(-100%);letter-spacing:0.4px;">43</div>
<div class="t" style="left:909.4000000000001px;top:186.93px;font-size:23.3px;color:#1a1a1a;font-weight:normal;transform:translateX(-100%);letter-spacing:0.4px;">40</div>
<div class="t" style="left:1001.4000000000001px;top:186.93px;font-size:23.3px;color:#1a1a1a;font-weight:normal;transform:translateX(-100%);letter-spacing:0.4px;">46</div>
<div class="t" style="left:1093.4px;top:186.93px;font-size:23.3px;color:#1a1a1a;font-weight:normal;transform:translateX(-100%);letter-spacing:0.4px;">47</div>
<div class="t" style="left:1187.4px;top:186.93px;font-size:23.3px;color:#1a1a1a;font-weight:normal;transform:translateX(-100%);letter-spacing:0.4px;">60</div>
<div class="t" style="left:1279.4px;top:186.93px;font-size:23.3px;color:#1a1a1a;font-weight:normal;transform:translateX(-100%);letter-spacing:0.4px;">50</div>
<div class="t" style="left:1371.4px;top:186.93px;font-size:23.3px;color:#1a1a1a;font-weight:normal;transform:translateX(-100%);letter-spacing:0.4px;">51</div>
<div class="t" style="left:1465.4px;top:186.93px;font-size:23.3px;color:#1a1a1a;font-weight:normal;transform:translateX(-100%);letter-spacing:0.4px;">62</div>
<div class="t" style="left:1559.4px;top:186.93px;font-size:23.3px;color:#1a1a1a;font-weight:normal;transform:translateX(-100%);letter-spacing:0.4px;">64</div>
<div class="t" style="left:21px;top:246.93px;font-size:23.3px;color:#1a1a1a;font-weight:normal;letter-spacing:0.4px;">11</div>
<div class="t" style="left:265.4px;top:246.93px;font-size:23.3px;color:#1a1a1a;font-weight:normal;transform:translateX(-100%);letter-spacing:0.4px;">36</div>
<div class="t" style="left:357.4px;top:246.93px;font-size:23.3px;color:#1a1a1a;font-weight:normal;transform:translateX(-100%);letter-spacing:0.4px;">64</div>
<div class="t" style="left:449.4px;top:246.93px;font-size:23.3px;color:#1a1a1a;font-weight:normal;transform:translateX(-100%);letter-spacing:0.4px;">60</div>
<div class="t" style="left:541.4px;top:246.93px;font-size:23.3px;color:#1a1a1a;font-weight:normal;transform:translateX(-100%);letter-spacing:0.4px;">59</div>
<div class="t" style="left:633.4000000000001px;top:246.93px;font-size:23.3px;color:#1a1a1a;font-weight:normal;transform:translateX(-100%);letter-spacing:0.4px;">63</div>
<div class="t" style="left:725.4000000000001px;top:246.93px;font-size:23.3px;color:#1a1a1a;font-weight:normal;transform:translateX(-100%);letter-spacing:0.4px;">64</div>
<div class="t" style="left:817.4000000000001px;top:246.93px;font-size:23.3px;color:#1a1a1a;font-weight:normal;transform:translateX(-100%);letter-spacing:0.4px;">77</div>
<div class="t" style="left:909.4000000000001px;top:246.93px;font-size:23.3px;color:#1a1a1a;font-weight:normal;transform:translateX(-100%);letter-spacing:0.4px;">90</div>
<div class="t" style="left:1001.4000000000001px;top:246.93px;font-size:23.3px;color:#1a1a1a;font-weight:normal;transform:translateX(-100%);letter-spacing:0.4px;">90</div>
<div class="t" style="left:1093.4px;top:246.93px;font-size:23.3px;color:#1a1a1a;font-weight:normal;transform:translateX(-100%);letter-spacing:0.4px;">95</div>
<div class="t" style="left:1187.4px;top:246.93px;font-size:23.3px;color:#1a1a1a;font-weight:normal;transform:translateX(-100%);letter-spacing:0.4px;">119</div>
<div class="t" style="left:1279.4px;top:246.93px;font-size:23.3px;color:#1a1a1a;font-weight:normal;transform:translateX(-100%);letter-spacing:0.4px;">112</div>
<div class="t" style="left:1371.4px;top:246.93px;font-size:23.3px;color:#1a1a1a;font-weight:normal;transform:translateX(-100%);letter-spacing:0.4px;">132</div>
<div class="t" style="left:1465.4px;top:246.93px;font-size:23.3px;color:#1a1a1a;font-weight:normal;transform:translateX(-100%);letter-spacing:0.4px;">147</div>
<div class="t" style="left:1559.4px;top:246.93px;font-size:23.3px;color:#1a1a1a;font-weight:normal;transform:translateX(-100%);letter-spacing:0.4px;">140</div>
<div class="t" style="left:21px;top:306.93px;font-size:23.3px;color:#1a1a1a;font-weight:normal;letter-spacing:0.4px;">12</div>
<div class="t" style="left:265.4px;top:306.93px;font-size:23.3px;color:#1a1a1a;font-weight:normal;transform:translateX(-100%);letter-spacing:0.4px;">219</div>
<div class="t" style="left:357.4px;top:306.93px;font-size:23.3px;color:#1a1a1a;font-weight:normal;transform:translateX(-100%);letter-spacing:0.4px;">320</div>
<div class="t" style="left:449.4px;top:306.93px;font-size:23.3px;color:#1a1a1a;font-weight:normal;transform:translateX(-100%);letter-spacing:0.4px;">330</div>
<div class="t" style="left:541.4px;top:306.93px;font-size:23.3px;color:#1a1a1a;font-weight:normal;transform:translateX(-100%);letter-spacing:0.4px;">366</div>
<div class="t" style="left:633.4000000000001px;top:306.93px;font-size:23.3px;color:#1a1a1a;font-weight:normal;transform:translateX(-100%);letter-spacing:0.4px;">446</div>
<div class="t" style="left:725.4000000000001px;top:306.93px;font-size:23.3px;color:#1a1a1a;font-weight:normal;transform:translateX(-100%);letter-spacing:0.4px;">488</div>
<div class="t" style="left:817.4000000000001px;top:306.93px;font-size:23.3px;color:#1a1a1a;font-weight:normal;transform:translateX(-100%);letter-spacing:0.4px;">548</div>
<div class="t" style="left:909.4000000000001px;top:306.93px;font-size:23.3px;color:#1a1a1a;font-weight:normal;transform:translateX(-100%);letter-spacing:0.4px;">594</div>
<div class="t" style="left:1001.4000000000001px;top:306.93px;font-size:23.3px;color:#1a1a1a;font-weight:normal;transform:translateX(-100%);letter-spacing:0.4px;">656</div>
<div class="t" style="left:1093.4px;top:306.93px;font-size:23.3px;color:#1a1a1a;font-weight:normal;transform:translateX(-100%);letter-spacing:0.4px;">696</div>
<div class="t" style="left:1187.4px;top:306.93px;font-size:23.3px;color:#1a1a1a;font-weight:normal;transform:translateX(-100%);letter-spacing:0.4px;">798</div>
<div class="t" style="left:1279.4px;top:306.93px;font-size:23.3px;color:#1a1a1a;font-weight:normal;transform:translateX(-100%);letter-spacing:0.4px;">820</div>
<div class="t" style="left:1371.4px;top:306.93px;font-size:23.3px;color:#1a1a1a;font-weight:normal;transform:translateX(-100%);letter-spacing:0.4px;">858</div>
<div class="t" style="left:1465.4px;top:306.93px;font-size:23.3px;color:#1a1a1a;font-weight:normal;transform:translateX(-100%);letter-spacing:0.4px;">1041</div>
<div class="t" style="left:1559.4px;top:306.93px;font-size:23.3px;color:#1a1a1a;font-weight:normal;transform:translateX(-100%);letter-spacing:0.4px;">1087</div>
<div class="t" style="left:21px;top:366.93px;font-size:23.3px;color:#1a1a1a;font-weight:normal;letter-spacing:0.4px;">13</div>
<div class="t" style="left:265.4px;top:366.93px;font-size:23.3px;color:#1a1a1a;font-weight:normal;transform:translateX(-100%);letter-spacing:0.4px;">508</div>
<div class="t" style="left:357.4px;top:366.93px;font-size:23.3px;color:#1a1a1a;font-weight:normal;transform:translateX(-100%);letter-spacing:0.4px;">749</div>
<div class="t" style="left:449.4px;top:366.93px;font-size:23.3px;color:#1a1a1a;font-weight:normal;transform:translateX(-100%);letter-spacing:0.4px;">877</div>
<div class="t" style="left:541.4px;top:366.93px;font-size:23.3px;color:#1a1a1a;font-weight:normal;transform:translateX(-100%);letter-spacing:0.4px;">923</div>
<div class="t" style="left:633.4000000000001px;top:366.93px;font-size:23.3px;color:#1a1a1a;font-weight:normal;transform:translateX(-100%);letter-spacing:0.4px;">1154</div>
<div class="t" style="left:725.4000000000001px;top:366.93px;font-size:23.3px;color:#1a1a1a;font-weight:normal;transform:translateX(-100%);letter-spacing:0.4px;">1224</div>
<div class="t" style="left:817.4000000000001px;top:366.93px;font-size:23.3px;color:#1a1a1a;font-weight:normal;transform:translateX(-100%);letter-spacing:0.4px;">1317</div>
<div class="t" style="left:909.4000000000001px;top:366.93px;font-size:23.3px;color:#1a1a1a;font-weight:normal;transform:translateX(-100%);letter-spacing:0.4px;">1423</div>
<div class="t" style="left:1001.4000000000001px;top:366.93px;font-size:23.3px;color:#1a1a1a;font-weight:normal;transform:translateX(-100%);letter-spacing:0.4px;">1549</div>
<div class="t" style="left:1093.4px;top:366.93px;font-size:23.3px;color:#1a1a1a;font-weight:normal;transform:translateX(-100%);letter-spacing:0.4px;">1657</div>
<div class="t" style="left:1187.4px;top:366.93px;font-size:23.3px;color:#1a1a1a;font-weight:normal;transform:translateX(-100%);letter-spacing:0.4px;">1791</div>
<div class="t" style="left:1279.4px;top:366.93px;font-size:23.3px;color:#1a1a1a;font-weight:normal;transform:translateX(-100%);letter-spacing:0.4px;">1819</div>
<div class="t" style="left:1371.4px;top:366.93px;font-size:23.3px;color:#1a1a1a;font-weight:normal;transform:translateX(-100%);letter-spacing:0.4px;">1898</div>
<div class="t" style="left:1465.4px;top:366.93px;font-size:23.3px;color:#1a1a1a;font-weight:normal;transform:translateX(-100%);letter-spacing:0.4px;">2436</div>
<div class="t" style="left:1559.4px;top:366.93px;font-size:23.3px;color:#1a1a1a;font-weight:normal;transform:translateX(-100%);letter-spacing:0.4px;">2568</div>
<div class="t" style="left:21px;top:426.93px;font-size:23.3px;color:#1a1a1a;font-weight:normal;letter-spacing:0.4px;">14</div>
<div class="t" style="left:265.4px;top:426.93px;font-size:23.3px;color:#1a1a1a;font-weight:normal;transform:translateX(-100%);letter-spacing:0.4px;">2283</div>
<div class="t" style="left:357.4px;top:426.93px;font-size:23.3px;color:#1a1a1a;font-weight:normal;transform:translateX(-100%);letter-spacing:0.4px;">3284</div>
<div class="t" style="left:449.4px;top:426.93px;font-size:23.3px;color:#1a1a1a;font-weight:normal;transform:translateX(-100%);letter-spacing:0.4px;">3609</div>
<div class="t" style="left:541.4px;top:426.93px;font-size:23.3px;color:#1a1a1a;font-weight:normal;transform:translateX(-100%);letter-spacing:0.4px;">3838</div>
<div class="t" style="left:633.4000000000001px;top:426.93px;font-size:23.3px;color:#1a1a1a;font-weight:normal;transform:translateX(-100%);letter-spacing:0.4px;">4939</div>
<div class="t" style="left:725.4000000000001px;top:426.93px;font-size:23.3px;color:#1a1a1a;font-weight:normal;transform:translateX(-100%);letter-spacing:0.4px;">5322</div>
<div class="t" style="left:817.4000000000001px;top:426.93px;font-size:23.3px;color:#1a1a1a;font-weight:normal;transform:translateX(-100%);letter-spacing:0.4px;">6175</div>
<div class="t" style="left:909.4000000000001px;top:426.93px;font-size:23.3px;color:#1a1a1a;font-weight:normal;transform:translateX(-100%);letter-spacing:0.4px;">6889</div>
<div class="t" style="left:1001.4000000000001px;top:426.93px;font-size:23.3px;color:#1a1a1a;font-weight:normal;transform:translateX(-100%);letter-spacing:0.4px;">7811</div>
<div class="t" style="left:1093.4px;top:426.93px;font-size:23.3px;color:#1a1a1a;font-weight:normal;transform:translateX(-100%);letter-spacing:0.4px;">8753</div>
<div class="t" style="left:1187.4px;top:426.93px;font-size:23.3px;color:#1a1a1a;font-weight:normal;transform:translateX(-100%);letter-spacing:0.4px;">10278</div>
<div class="t" style="left:1279.4px;top:426.93px;font-size:23.3px;color:#1a1a1a;font-weight:normal;transform:translateX(-100%);letter-spacing:0.4px;">11335</div>
<div class="t" style="left:1371.4px;top:426.93px;font-size:23.3px;color:#1a1a1a;font-weight:normal;transform:translateX(-100%);letter-spacing:0.4px;">13050</div>
<div class="t" style="left:1465.4px;top:426.93px;font-size:23.3px;color:#1a1a1a;font-weight:normal;transform:translateX(-100%);letter-spacing:0.4px;">17001</div>
<div class="t" style="left:1559.4px;top:426.93px;font-size:23.3px;color:#1a1a1a;font-weight:normal;transform:translateX(-100%);letter-spacing:0.4px;">20057</div>
<div class="t" style="left:21px;top:486.93px;font-size:23.3px;color:#1a1a1a;font-weight:normal;letter-spacing:0.4px;">15</div>
<div class="t" style="left:265.4px;top:486.93px;font-size:23.3px;color:#1a1a1a;font-weight:normal;transform:translateX(-100%);letter-spacing:0.4px;">13825</div>
<div class="t" style="left:357.4px;top:486.93px;font-size:23.3px;color:#1a1a1a;font-weight:normal;transform:translateX(-100%);letter-spacing:0.4px;">20771</div>
<div class="t" style="left:449.4px;top:486.93px;font-size:23.3px;color:#1a1a1a;font-weight:normal;transform:translateX(-100%);letter-spacing:0.4px;">24875</div>
<div class="t" style="left:541.4px;top:486.93px;font-size:23.3px;color:#1a1a1a;font-weight:normal;transform:translateX(-100%);letter-spacing:0.4px;">27353</div>
<div class="t" style="left:633.4000000000001px;top:486.93px;font-size:23.3px;color:#1a1a1a;font-weight:normal;transform:translateX(-100%);letter-spacing:0.4px;">28404</div>
<div class="t" style="left:725.4000000000001px;top:486.93px;font-size:23.3px;color:#1a1a1a;font-weight:normal;transform:translateX(-100%);letter-spacing:0.4px;">27084</div>
<div class="t" style="left:817.4000000000001px;top:486.93px;font-size:23.3px;color:#1a1a1a;font-weight:normal;transform:translateX(-100%);letter-spacing:0.4px;">26472</div>
<div class="t" style="left:909.4000000000001px;top:486.93px;font-size:23.3px;color:#1a1a1a;font-weight:normal;transform:translateX(-100%);letter-spacing:0.4px;">25005</div>
<div class="t" style="left:1001.4000000000001px;top:486.93px;font-size:23.3px;color:#1a1a1a;font-weight:normal;transform:translateX(-100%);letter-spacing:0.4px;">23389</div>
<div class="t" style="left:1093.4px;top:486.93px;font-size:23.3px;color:#1a1a1a;font-weight:normal;transform:translateX(-100%);letter-spacing:0.4px;">20722</div>
<div class="t" style="left:1187.4px;top:486.93px;font-size:23.3px;color:#1a1a1a;font-weight:normal;transform:translateX(-100%);letter-spacing:0.4px;">18134</div>
<div class="t" style="left:1279.4px;top:486.93px;font-size:23.3px;color:#1a1a1a;font-weight:normal;transform:translateX(-100%);letter-spacing:0.4px;">14751</div>
<div class="t" style="left:1371.4px;top:486.93px;font-size:23.3px;color:#1a1a1a;font-weight:normal;transform:translateX(-100%);letter-spacing:0.4px;">12507</div>
<div class="t" style="left:1465.4px;top:486.93px;font-size:23.3px;color:#1a1a1a;font-weight:normal;transform:translateX(-100%);letter-spacing:0.4px;">9497</div>
<div class="t" style="left:1559.4px;top:486.93px;font-size:23.3px;color:#1a1a1a;font-weight:normal;transform:translateX(-100%);letter-spacing:0.4px;">4859</div>
<div class="t" style="left:21px;top:546.93px;font-size:23.3px;color:#1a1a1a;font-weight:normal;letter-spacing:0.4px;">26</div>
<div class="t" style="left:265.4px;top:546.93px;font-size:23.3px;color:#1a1a1a;font-weight:normal;transform:translateX(-100%);letter-spacing:0.4px;">11125</div>
<div class="t" style="left:357.4px;top:546.93px;font-size:23.3px;color:#1a1a1a;font-weight:normal;transform:translateX(-100%);letter-spacing:0.4px;">9786</div>
<div class="t" style="left:449.4px;top:546.93px;font-size:23.3px;color:#1a1a1a;font-weight:normal;transform:translateX(-100%);letter-spacing:0.4px;">4988</div>
<div class="t" style="left:541.4px;top:546.93px;font-size:23.3px;color:#1a1a1a;font-weight:normal;transform:translateX(-100%);letter-spacing:0.4px;">676</div>
<div class="t" style="left:633.4000000000001px;top:546.93px;font-size:23.3px;color:#1a1a1a;font-weight:normal;transform:translateX(-100%);letter-spacing:0.4px;">487</div>
<div class="t" style="left:725.4000000000001px;top:546.93px;font-size:23.3px;color:#1a1a1a;font-weight:normal;transform:translateX(-100%);letter-spacing:0.4px;">386</div>
<div class="t" style="left:817.4000000000001px;top:546.93px;font-size:23.3px;color:#1a1a1a;font-weight:normal;transform:translateX(-100%);letter-spacing:0.4px;">38</div>
<div class="t" style="left:909.4000000000001px;top:546.93px;font-size:23.3px;color:#1a1a1a;font-weight:normal;transform:translateX(-100%);letter-spacing:0.4px;">11</div>
<div class="t" style="left:1001.4000000000001px;top:546.93px;font-size:23.3px;color:#1a1a1a;font-weight:normal;transform:translateX(-100%);letter-spacing:0.4px;">1</div>
<div class="t" style="left:1093.4px;top:546.93px;font-size:23.3px;color:#1a1a1a;font-weight:normal;transform:translateX(-100%);letter-spacing:0.4px;">1</div>
<div class="t" style="left:1187.4px;top:546.93px;font-size:23.3px;color:#1a1a1a;font-weight:normal;transform:translateX(-100%);letter-spacing:0.4px;">1</div>
<div class="t" style="left:1279.4px;top:546.93px;font-size:23.3px;color:#1a1a1a;font-weight:normal;transform:translateX(-100%);letter-spacing:0.4px;">0</div>
<div class="t" style="left:1371.4px;top:546.93px;font-size:23.3px;color:#1a1a1a;font-weight:normal;transform:translateX(-100%);letter-spacing:0.4px;">0</div>
<div class="t" style="left:1465.4px;top:546.93px;font-size:23.3px;color:#1a1a1a;font-weight:normal;transform:translateX(-100%);letter-spacing:0.4px;">0</div>
<div class="t" style="left:1559.4px;top:546.93px;font-size:23.3px;color:#1a1a1a;font-weight:normal;transform:translateX(-100%);letter-spacing:0.4px;">0</div>
</div>
<div class="abs" style="left:436.5px;top:1144px;width:253px;height:48px;border-radius:10px;background:#ebebeb"></div>
<div class="t" style="left:492.5px;top:1169.26px;font-size:26.1px;color:#222222;font-weight:normal;">Result 1</div>
<svg style="left:0;top:0" width="1" height="1"><g fill="none" stroke="#2a2a2a" stroke-width="2.4" stroke-linecap="round" stroke-linejoin="round">
<path d="M656.5 1165.5 L662.4 1159.7 L668.3 1165.5"/><path d="M656.5 1172 L662.4 1177.8 L668.3 1172"/></g></svg>
<div class="abs" style="left:706.5px;top:1144px;width:147.5px;height:48px;border-radius:10px;background:#ebebeb"></div>
<div class="t" style="left:730.5px;top:1169.12px;font-size:26.5px;color:#222222;font-weight:normal;">Export...</div>
<div class="t" style="left:1175px;top:1167.86px;font-size:23.5px;color:#8a8a8a;font-weight:normal;">9 rows</div>
<svg style="left:0;top:0" width="1" height="1">
<circle cx="1913.9" cy="1167.9" r="13.6" fill="#5ca63b"/>
<path d="M1906.5 1168.5 L1911.8 1173.5 L1921.5 1162.5" fill="none" stroke="#fff" stroke-width="3.6" stroke-linecap="round" stroke-linejoin="round"/>
</svg>
<div class="t" style="left:1945px;top:1167.86px;font-size:23.5px;color:#8a8a8a;font-weight:normal;letter-spacing:1px;">11s</div>
<div class="abs" style="left:0;top:0;width:24px;height:8px;background:#000"></div>
<div class="abs" style="left:0;top:0;width:8px;height:24px;background:#000"></div>
<div class="abs" style="right:0;top:0;width:24px;height:8px;background:#000"></div>
<div class="abs" style="right:0;top:0;width:8px;height:24px;background:#000"></div>
<div class="abs" style="left:0;bottom:0;width:24px;height:8px;background:#000"></div>
<div class="abs" style="left:0;bottom:0;width:8px;height:24px;background:#000"></div>
<div class="abs" style="right:0;bottom:0;width:24px;height:8px;background:#000"></div>
<div class="abs" style="right:0;bottom:0;width:8px;height:24px;background:#000"></div>
</body></html>
